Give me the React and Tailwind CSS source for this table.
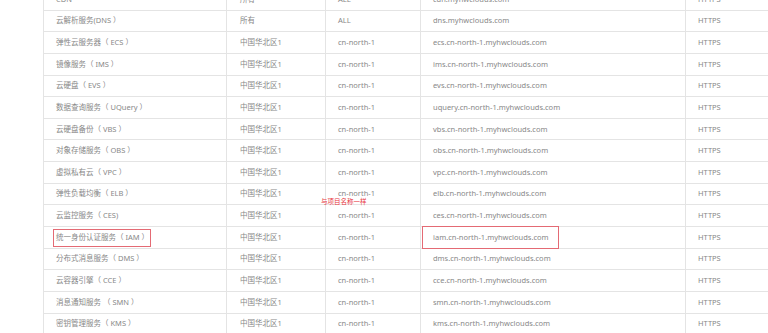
import React from "react";

const rows = [
  ["CDN", "所有", "ALL", "cdn.myhwclouds.com"],
  ["云解析服务(DNS ）", "所有", "ALL", "dns.myhwclouds.com"],
  ["弹性云服务器（ ECS ）", "中国华北区1", "cn-north-1", "ecs.cn-north-1.myhwclouds.com"],
  ["镜像服务（ IMS ）", "中国华北区1", "cn-north-1", "ims.cn-north-1.myhwclouds.com"],
  ["云硬盘（ EVS ）", "中国华北区1", "cn-north-1", "evs.cn-north-1.myhwclouds.com"],
  ["数据查询服务（ UQuery ）", "中国华北区1", "cn-north-1", "uquery.cn-north-1.myhwclouds.com"],
  ["云硬盘备份（ VBS ）", "中国华北区1", "cn-north-1", "vbs.cn-north-1.myhwclouds.com"],
  ["对象存储服务（ OBS ）", "中国华北区1", "cn-north-1", "obs.cn-north-1.myhwclouds.com"],
  ["虚拟私有云（ VPC ）", "中国华北区1", "cn-north-1", "vpc.cn-north-1.myhwclouds.com"],
  ["弹性负载均衡（ ELB ）", "中国华北区1", "cn-north-1", "elb.cn-north-1.myhwclouds.com"],
  ["云监控服务（ CES)", "中国华北区1", "cn-north-1", "ces.cn-north-1.myhwclouds.com"],
  ["统一身份认证服务（ IAM ）", "中国华北区1", "cn-north-1", "iam.cn-north-1.myhwclouds.com"],
  ["分布式消息服务（ DMS ）", "中国华北区1", "cn-north-1", "dms.cn-north-1.myhwclouds.com"],
  ["云容器引擎（ CCE ）", "中国华北区1", "cn-north-1", "cce.cn-north-1.myhwclouds.com"],
  ["消息通知服务 （ SMN ）", "中国华北区1", "cn-north-1", "smn.cn-north-1.myhwclouds.com"],
  ["密钥管理服务（ KMS ）", "中国华北区1", "cn-north-1", "kms.cn-north-1.myhwclouds.com"],
];

export default function App() {
  return (
    <div
      className="relative h-[333px] w-[768px] overflow-hidden bg-white text-[7.5px] text-[#888888]"
      style={{ fontFamily: '"Noto Sans", "Noto Sans CJK SC", sans-serif' }}
    >
      <div className="ml-[43px] mt-[-11px] w-[850px] border-l border-[#e4e4e4]">
        {rows.map((r, i) => {
          const iam = i === 11;
          return (
            <div
              key={i}
              className="grid h-[21.65px] grid-cols-[183px_99px_95px_265px_208px] border-b border-[#e4e4e4]"
            >
              <div className="relative flex items-center whitespace-pre border-r border-[#e4e4e4] pl-[12px]">
                {r[0]}
                {iam && (
                  <div className="absolute left-[9px] top-[2px] h-[18px] w-[98px] border-[1.5px] border-[#e46a74]" />
                )}
              </div>
              <div className="flex items-center border-r border-[#e4e4e4] pl-[13px]">{r[1]}</div>
              <div className="flex items-center border-r border-[#e4e4e4] pl-[12px]">{r[2]}</div>
              <div className="relative flex items-center border-r border-[#e4e4e4] pl-[12px]">
                {r[3]}
                {iam && (
                  <div className="absolute left-[1px] top-[-1px] h-[23px] w-[137px] border-[1.5px] border-[#e46a74]" />
                )}
              </div>
              <div className="flex items-center pl-[12px]">HTTPS</div>
            </div>
          );
        })}
      </div>
      <div className="absolute left-[321px] top-[199px] text-[6.5px] leading-none text-[#e8343c]">
        与项目名称一样
      </div>
    </div>
  );
}
